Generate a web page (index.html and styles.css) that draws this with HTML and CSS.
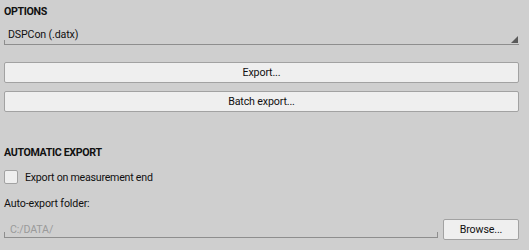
FILE: index.html
```html
<!DOCTYPE html>
<html lang="en">
<head>
  <meta charset="UTF-8" />
  <title>Export settings</title>
  <link rel="stylesheet" href="styles.css">
</head>
<body>
  <div class="panel">
    <h2 class="section-title">OPTIONS</h2>

    <div class="combo">
      <span class="combo-text">DSPCon (.datx)</span>
      <svg class="combo-arrow" width="7" height="7" viewBox="0 0 7 7">
        <path d="M7 0 L7 7 L0 7 Z" fill="#5a5a5a" />
      </svg>
    </div>

    <button class="btn btn-wide">Export...</button>
    <button class="btn btn-wide">Batch export...</button>

    <h2 class="section-title auto-title">AUTOMATIC EXPORT</h2>

    <label class="check">
      <span class="check-box"></span>
      <span>Export on measurement end</span>
    </label>

    <div class="field-label">Auto-export folder:</div>

    <div class="folder-row">
      <div class="line-edit">C:/DATA/</div>
      <button class="btn btn-browse">Browse...</button>
    </div>
  </div>
</body>
</html>
```

FILE: styles.css
```css
body {
  margin: 0;
  background-color: #cfcfcf;
  font-family: Roboto, "Liberation Sans", sans-serif;
  font-size: 10.67px;
  letter-spacing: -0.15px;
  color: #111;
}
.panel {
  padding: 5px 10px 0 4px;
}
.section-title {
  margin: 0;
  font-size: 10.67px;
  font-weight: bold;
  letter-spacing: -0.35px;
  line-height: 14px;
}
.auto-title {
  margin-top: 34px;
}
.combo {
  display: flex;
  align-items: flex-end;
  height: 17px;
  margin-top: 8px;
  padding-left: 4px;
  border-bottom: 1px solid #8e8e8e;
  background: linear-gradient(#8e8e8e, #8e8e8e) left bottom / 1px 4px no-repeat;
}
.combo-text {
  flex: 1;
  line-height: 15px;
  padding-bottom: 2px;
}
.combo-arrow {
  display: block;
  margin: 0 1px 1px 0;
}
.btn {
  display: block;
  box-sizing: border-box;
  height: 21px;
  padding: 0;
  font-family: inherit;
  font-size: 10.67px;
  letter-spacing: inherit;
  color: #111;
  background-color: #efefef;
  border: 1px solid #a2a2a2;
  border-radius: 2px;
}
.btn-wide {
  width: 100%;
  margin-top: 17px;
}
.btn-wide + .btn-wide {
  margin-top: 8px;
}
.check {
  display: flex;
  align-items: center;
  gap: 7px;
  margin-top: 10px;
  height: 14px;
  letter-spacing: -0.25px;
}
.check-box {
  box-sizing: border-box;
  width: 14px;
  height: 14px;
  background-color: #efefef;
  border: 1px solid #a2a2a2;
  border-radius: 2px;
}
.field-label {
  margin-top: 13px;
  line-height: 14px;
}
.folder-row {
  display: flex;
  align-items: flex-end;
  gap: 5px;
  margin-top: 8px;
}
.line-edit {
  flex: 1;
  height: 15px;
  padding: 3px 0 0 6px;
  line-height: 15px;
  color: #9a9a9a;
  border-bottom: 1px solid #8e8e8e;
  background:
    linear-gradient(#8e8e8e, #8e8e8e) left bottom / 1px 5px no-repeat,
    linear-gradient(#8e8e8e, #8e8e8e) right bottom / 1px 5px no-repeat;
  margin-bottom: 2px;
}
.btn-browse {
  width: 76px;
}
```
